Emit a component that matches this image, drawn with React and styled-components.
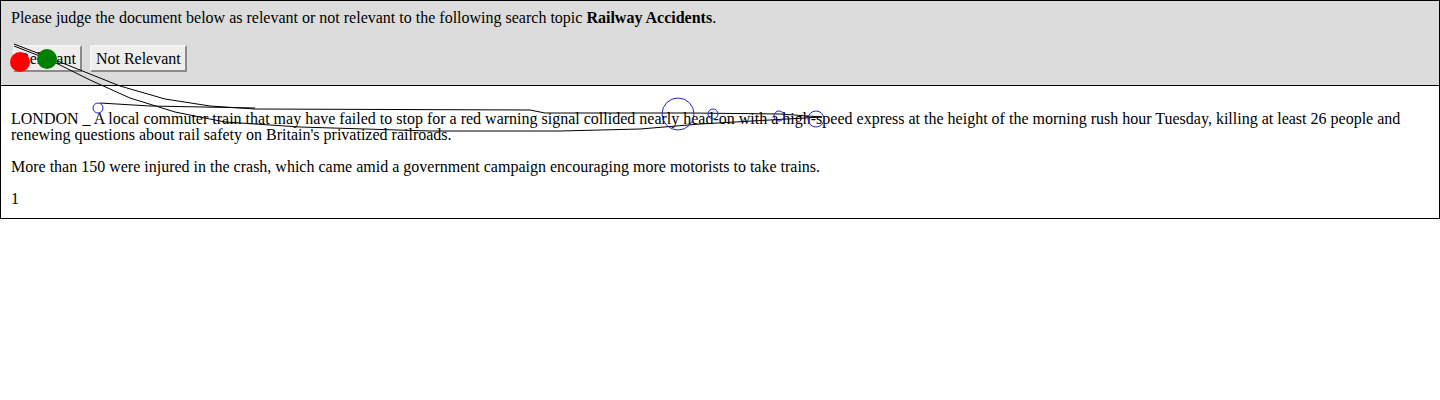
import React from "react";
import styled, { createGlobalStyle } from "styled-components";

const Global = createGlobalStyle`
  html, body { margin: 0; padding: 0; background: #fff; }
  body { font-family: "Liberation Serif", "Times New Roman", serif; font-size: 16px; color: #000; }
`;

const Page = styled.div`
  position: relative;
  width: 1440px;
  height: 400px;
`;

const Header = styled.div`
  background: #dcdcdc;
  border: 1px solid #000;
  padding: 9px 10px 13px;
  display: flex;
  flex-direction: column;
  gap: 19px;
`;

const Prompt = styled.div`
  line-height: 16px;
`;

const ButtonRow = styled.div`
  display: flex;
  gap: 8px;
  padding-left: 2px;
`;

const JudgeButton = styled.button`
  font-family: "Liberation Serif", "Times New Roman", serif;
  font-size: 16px;
  color: #000;
  background: #efeeec;
  border: 2px solid #c8c8c8;
  border-top-color: #f4f4f4;
  border-left-color: #f4f4f4;
  border-right-color: #8a8a8a;
  border-bottom-color: #8a8a8a;
  height: 27px;
  padding: 0 4px;
  line-height: 20px;
`;

const Document = styled.div`
  border: 1px solid #000;
  border-top: none;
  padding: 25px 10px 11px;
`;

const Para = styled.p`
  margin: 0 0 16px;
  line-height: 16px;
  &:last-child { margin-bottom: 0; }
`;

const Overlay = styled.svg`
  position: absolute;
  left: 0;
  top: 0;
  pointer-events: none;
`;

const trailOut = "14,44 40,54 80,70 120,86 165,99 210,106 255,109 530,110 545,113 690,113 780,114 822,117";
const trailBack = "822,117 700,124 640,129 560,131 430,131 300,127 225,122 175,112 130,98 90,80 50,60 14,46";
const trailA = "100,103 150,106 255,108";

const circles = [
  { x: 98, y: 108, r: 5 },
  { x: 678, y: 114, r: 16 },
  { x: 713, y: 114, r: 5 },
  { x: 779, y: 116, r: 5 },
  { x: 816, y: 119, r: 8 },
];

export default function App() {
  return (
    <Page>
      <Global />
      <Header>
        <Prompt>
          Please judge the document below as relevant or not relevant to the following search topic <b>Railway Accidents</b>.
        </Prompt>
        <ButtonRow>
          <JudgeButton>Relevant</JudgeButton>
          <JudgeButton>Not Relevant</JudgeButton>
        </ButtonRow>
      </Header>
      <Document>
        <Para>
          LONDON _ A local commuter train that may have failed to stop for a red warning signal collided nearly head-on with a high-speed express at the height of the morning rush hour Tuesday, killing at least 26 people and renewing questions about rail safety on Britain's privatized railroads.
        </Para>
        <Para>
          More than 150 were injured in the crash, which came amid a government campaign encouraging more motorists to take trains.
        </Para>
        <Para>1</Para>
      </Document>
      <Overlay width="1440" height="400" viewBox="0 0 1440 400">
        <polyline points={trailOut} fill="none" stroke="#000" strokeWidth="1" />
        <polyline points={trailBack} fill="none" stroke="#000" strokeWidth="1" />
        <polyline points={trailA} fill="none" stroke="#000" strokeWidth="1" />
        {circles.map((c, i) => (
          <circle key={i} cx={c.x} cy={c.y} r={c.r} fill="none" stroke="#2222cc" strokeWidth="1" />
        ))}
        <circle cx="20" cy="62" r="10" fill="#ff0000" />
        <circle cx="47" cy="59" r="10" fill="#008000" />
      </Overlay>
    </Page>
  );
}
